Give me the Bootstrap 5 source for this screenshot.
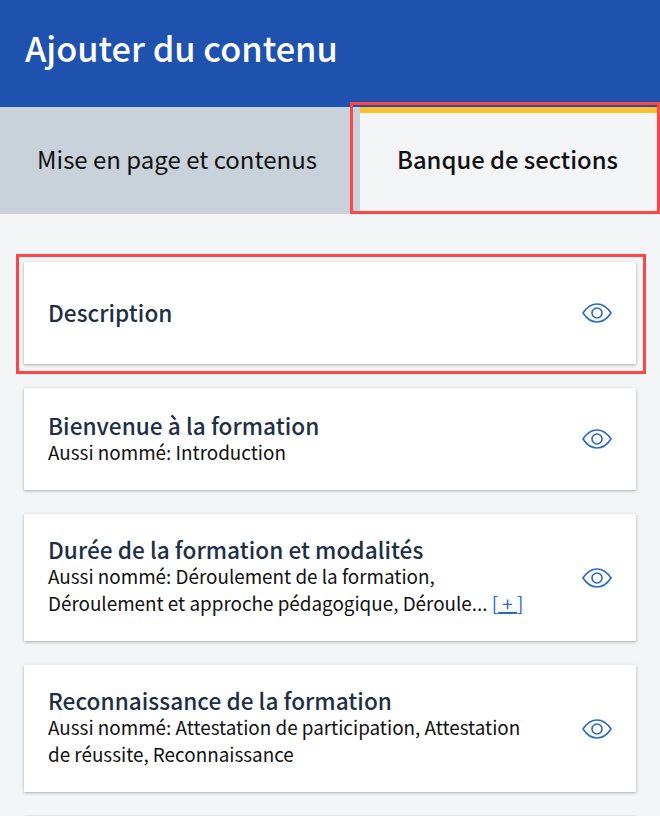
<!DOCTYPE html>
<html lang="fr"><head><meta charset="utf-8">
<link href="https://cdn.jsdelivr.net/npm/bootstrap@5.3.0/dist/css/bootstrap.min.css" rel="stylesheet">
<style>
html,body{height:816px;overflow:hidden}
body{background:#f4f5f7;font-family:"Noto Sans CJK SC","Noto Sans",sans-serif;color:#111}
.head-bar{background:#1e52ae;height:107px;padding:0 25px;color:#fff;font-size:34.3px;font-weight:500;line-height:94px}
.tab-row{height:107px}
.tab-item{background:#c9d1db;font-size:24px;color:#111;width:360px;padding:0 6px 4px 0}
.tab-item.on{background:#f4f5f7;width:300px;font-size:23.8px;font-weight:500;position:relative;border-top:6px solid #fcbf30;padding:0 5px 10px 0}
.tab-item.on::after{content:"";position:absolute;left:-10px;top:-11px;right:0;bottom:0;border:3px solid #ff4545}
.sec-list{padding:48px 24px 0;gap:24px}
.sec-item{background:#fff;box-shadow:0 1px 3px rgba(0,0,0,.3);padding:0 24px;position:relative;border:0}
.tall0{height:102px}.tall1{height:102px}.tall2{height:127px}
.mark0::after{content:"";position:absolute;inset:-8px -10px -10px -8px;border:3px solid #ff4545}
.sec-text{padding-bottom:1px}
.tall2 .sec-text{padding-bottom:3px}
.sec-name{font-size:22.6px;font-weight:500;color:#1c2f47;line-height:26px;letter-spacing:.04px}
.sec-alias{font-size:18.85px;line-height:27px;color:#111;margin-top:-1px}
.more-link{color:#2a66d0}
.more-link u{text-decoration-thickness:2px}
.eye-svg{width:30px;height:22px;flex:none}
</style></head><body>
<div class="head-bar">Ajouter du contenu</div>
<div class="d-flex tab-row">
<div class="tab-item d-flex align-items-center justify-content-center">Mise en page et contenus</div>
<div class="tab-item on d-flex align-items-center justify-content-center">Banque de sections</div>
</div>
<div class="d-flex flex-column sec-list">
<div class="sec-item tall0 mark0 d-flex align-items-center justify-content-between"><div><div class="sec-name">Description</div></div><svg class="eye-svg" viewBox="0 0 30 22" fill="none" stroke="#2a66d0" stroke-width="1.6"><path d="M1 11C5 5 10 2 15 2s10 3 14 9c-4 6-9 9-14 9S5 17 1 11z"/><circle cx="15" cy="11" r="5"/></svg></div>
<div class="sec-item tall1 d-flex align-items-center justify-content-between"><div class="sec-text"><div class="sec-name">Bienvenue à la formation</div><div class="sec-alias">Aussi nommé: Introduction</div></div><svg class="eye-svg" viewBox="0 0 30 22" fill="none" stroke="#2a66d0" stroke-width="1.6"><path d="M1 11C5 5 10 2 15 2s10 3 14 9c-4 6-9 9-14 9S5 17 1 11z"/><circle cx="15" cy="11" r="5"/></svg></div>
<div class="sec-item tall2 d-flex align-items-center justify-content-between"><div class="sec-text"><div class="sec-name">Durée de la formation et modalités</div><div class="sec-alias">Aussi nommé: Déroulement de la formation,<br>Déroulement et approche pédagogique, Déroule... <span class="more-link">[<u>&nbsp;+&nbsp;</u>]</span></div></div><svg class="eye-svg" viewBox="0 0 30 22" fill="none" stroke="#2a66d0" stroke-width="1.6"><path d="M1 11C5 5 10 2 15 2s10 3 14 9c-4 6-9 9-14 9S5 17 1 11z"/><circle cx="15" cy="11" r="5"/></svg></div>
<div class="sec-item tall2 d-flex align-items-center justify-content-between"><div class="sec-text"><div class="sec-name">Reconnaissance de la formation</div><div class="sec-alias">Aussi nommé: Attestation de participation, Attestation<br>de réussite, Reconnaissance</div></div><svg class="eye-svg" viewBox="0 0 30 22" fill="none" stroke="#2a66d0" stroke-width="1.6"><path d="M1 11C5 5 10 2 15 2s10 3 14 9c-4 6-9 9-14 9S5 17 1 11z"/><circle cx="15" cy="11" r="5"/></svg></div>
<div class="sec-item tall2"></div>
</div>
</body></html>
